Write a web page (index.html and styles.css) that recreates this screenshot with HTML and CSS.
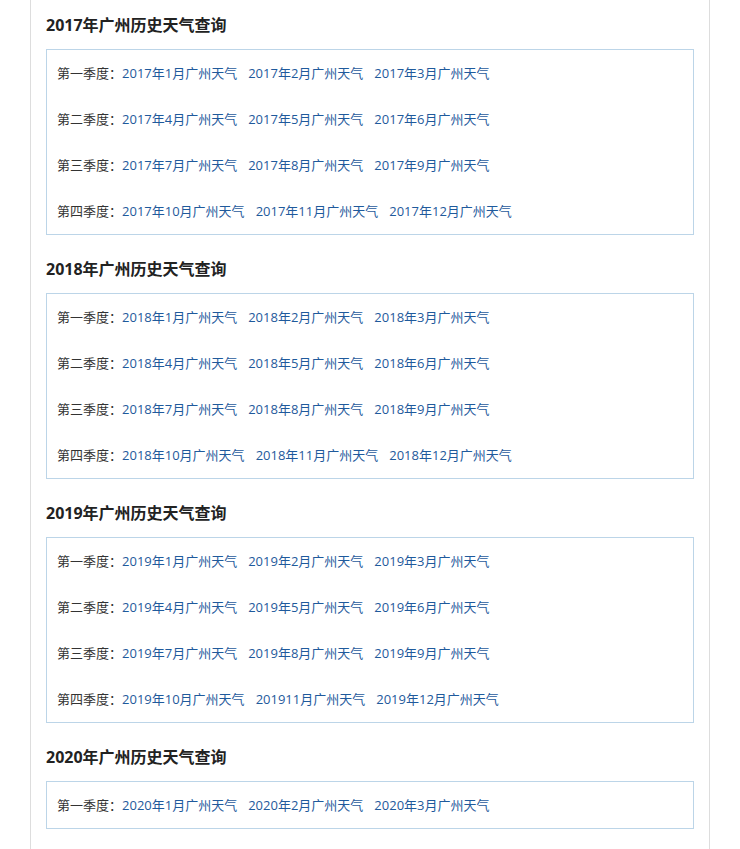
FILE: index.html
```html
<!DOCTYPE html>
<html lang="zh-CN">
<head>
    <meta charset="UTF-8">
    <meta name="viewport" content="width=device-width, initial-scale=1.0">
    <title>广州历史天气查询</title>
    <link rel="stylesheet" href="styles.css">
</head>
<body>

    <div class="main">

        <h3 class="year-title">2017年广州历史天气查询</h3>
        <div class="year-box">
            <p class="season">第一季度：<a href="#">2017年1月广州天气</a><a href="#">2017年2月广州天气</a><a href="#">2017年3月广州天气</a></p>
            <p class="season">第二季度：<a href="#">2017年4月广州天气</a><a href="#">2017年5月广州天气</a><a href="#">2017年6月广州天气</a></p>
            <p class="season">第三季度：<a href="#">2017年7月广州天气</a><a href="#">2017年8月广州天气</a><a href="#">2017年9月广州天气</a></p>
            <p class="season">第四季度：<a href="#">2017年10月广州天气</a><a href="#">2017年11月广州天气</a><a href="#">2017年12月广州天气</a></p>
        </div>

        <h3 class="year-title">2018年广州历史天气查询</h3>
        <div class="year-box">
            <p class="season">第一季度：<a href="#">2018年1月广州天气</a><a href="#">2018年2月广州天气</a><a href="#">2018年3月广州天气</a></p>
            <p class="season">第二季度：<a href="#">2018年4月广州天气</a><a href="#">2018年5月广州天气</a><a href="#">2018年6月广州天气</a></p>
            <p class="season">第三季度：<a href="#">2018年7月广州天气</a><a href="#">2018年8月广州天气</a><a href="#">2018年9月广州天气</a></p>
            <p class="season">第四季度：<a href="#">2018年10月广州天气</a><a href="#">2018年11月广州天气</a><a href="#">2018年12月广州天气</a></p>
        </div>

        <h3 class="year-title">2019年广州历史天气查询</h3>
        <div class="year-box">
            <p class="season">第一季度：<a href="#">2019年1月广州天气</a><a href="#">2019年2月广州天气</a><a href="#">2019年3月广州天气</a></p>
            <p class="season">第二季度：<a href="#">2019年4月广州天气</a><a href="#">2019年5月广州天气</a><a href="#">2019年6月广州天气</a></p>
            <p class="season">第三季度：<a href="#">2019年7月广州天气</a><a href="#">2019年8月广州天气</a><a href="#">2019年9月广州天气</a></p>
            <p class="season">第四季度：<a href="#">2019年10月广州天气</a><a href="#">201911月广州天气</a><a href="#">2019年12月广州天气</a></p>
        </div>

        <h3 class="year-title">2020年广州历史天气查询</h3>
        <div class="year-box">
            <p class="season">第一季度：<a href="#">2020年1月广州天气</a><a href="#">2020年2月广州天气</a><a href="#">2020年3月广州天气</a></p>
        </div>

    </div>

</body>
</html>
```

FILE: styles.css
```css
body {
    margin: 0;
    padding: 0;
    background-color: #fff;
    font-family: "Open Sans", "Noto Sans CJK SC", sans-serif;
    color: #333;
}

.main {
    width: 680px;
    margin: 0 auto;
    padding: 11px 15px 20px;
    box-sizing: border-box;
    border-left: 1px solid #ddd;
    border-right: 1px solid #ddd;
}

.year-title {
    margin: 20px 0 10px;
    font-size: 16px;
    line-height: 28px;
    font-weight: bold;
    color: #222;
}

.year-title:first-child {
    margin-top: 0;
}

.year-box {
    border: 1px solid #bcd5e8;
    padding: 0 10px;
}

.season {
    margin: 0;
    font-size: 13px;
    line-height: 46px;
    color: #333;
    white-space: nowrap;
}

.season a {
    color: #1f5a9c;
    text-decoration: none;
    margin-right: 11px;
}

.season a:hover {
    text-decoration: underline;
}
```
